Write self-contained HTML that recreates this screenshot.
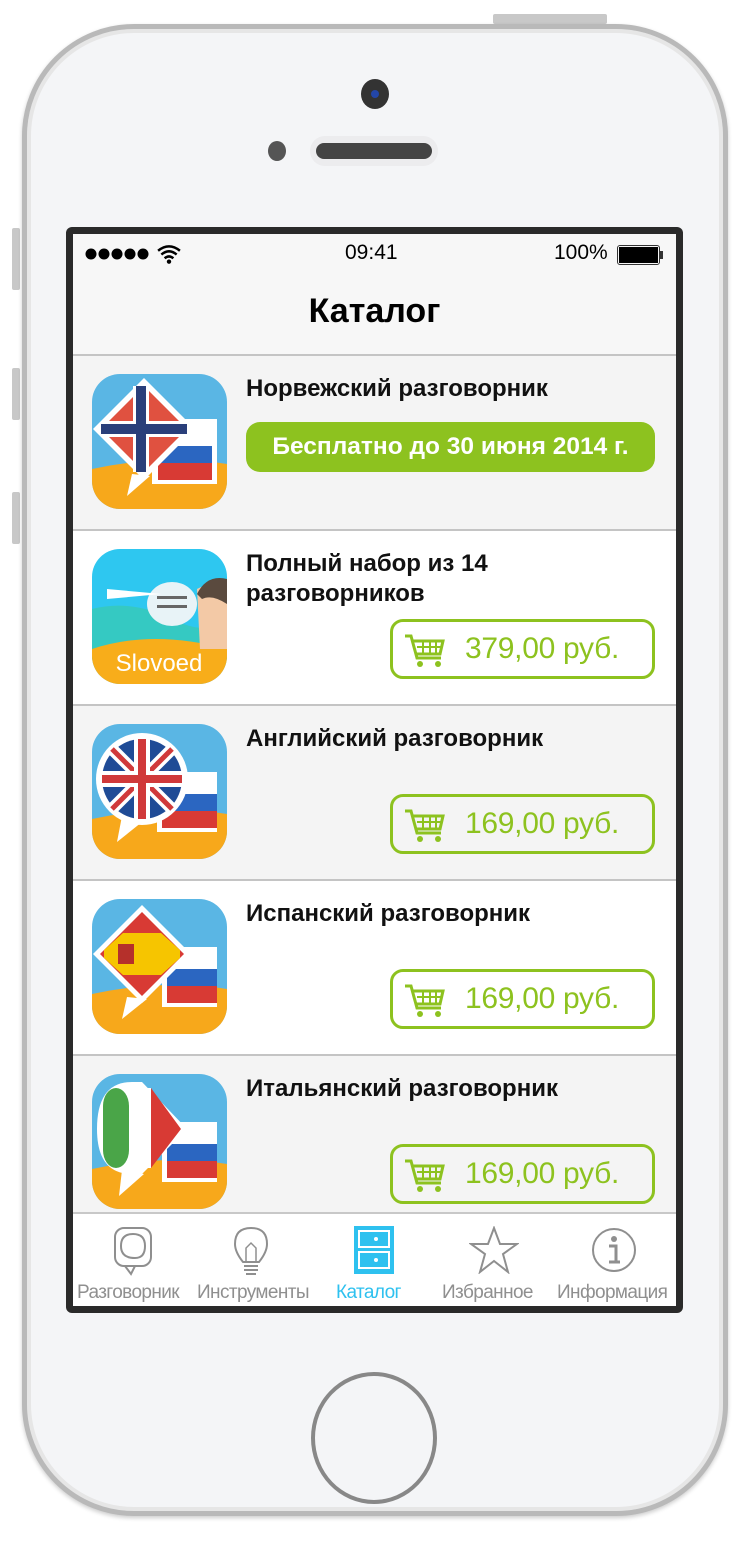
<!DOCTYPE html>
<html><head><meta charset="utf-8">
<style>
*{margin:0;padding:0;box-sizing:border-box}
body{width:744px;height:1548px;background:#fff;position:relative;overflow:hidden;font-family:"Liberation Sans",Arial,sans-serif}
.phone{position:absolute;left:22px;top:24px;width:706px;height:1492px;border-radius:112px;background:#f4f5f7;border:5px solid #b9b9b9;box-shadow:inset 0 0 0 4px #e6e6e6, 0 2px 4px rgba(0,0,0,.2)}
.btn-side{position:absolute;background:#c8c8c8;border-radius:2px}
.screen{position:absolute;left:66px;top:227px;width:617px;height:1086px;background:#2a2a2a;border-radius:6px}
.inner{position:absolute;left:73px;top:234px;width:603px;height:1072px;background:#f7f7f7;overflow:hidden}
.sb{position:absolute;top:7px;font-size:21px;color:#000}
.title{position:absolute;top:58px;width:100%;text-align:center;font-size:34px;font-weight:bold}
.row{position:absolute;left:0;width:603px;height:175px;border-top:2px solid #c4c4c4}
.row .ic{position:absolute;left:19px;top:18px;width:135px;height:135px;border-radius:28px;overflow:hidden}
.row .t{position:absolute;left:173px;top:18px;font-size:24px;font-weight:bold;color:#111;line-height:30px}
.free{position:absolute;left:173px;top:66px;width:409px;height:50px;border-radius:14px;background:#8dc21f;color:#fff;font-size:24.5px;font-weight:bold;text-align:center;line-height:50px}
.buy{position:absolute;left:317px;width:265px;height:60px;border:3px solid #8dc21f;border-radius:13px;color:#8dc21f;font-size:30px;line-height:54px;padding-left:72px;background:transparent;letter-spacing:-0.3px}
.buy svg{position:absolute;left:10px;top:10px}
.tab{position:absolute;left:0;top:978px;width:603px;height:94px;background:#fff;border-top:2px solid #c8c8c8}
.tl{position:absolute;top:68px;font-size:19px;color:#8f8f8f;white-space:nowrap;letter-spacing:-0.6px}
</style></head><body>
<div class="btn-side" style="left:493px;top:14px;width:114px;height:10px"></div>
<div class="btn-side" style="left:12px;top:228px;width:8px;height:62px"></div>
<div class="btn-side" style="left:12px;top:368px;width:8px;height:52px"></div>
<div class="btn-side" style="left:12px;top:492px;width:8px;height:52px"></div>
<div class="phone"></div>
<div style="position:absolute;left:361px;top:79px;width:28px;height:30px;border-radius:50%;background:#333"><div style="margin:11px auto;width:8px;height:8px;border-radius:50%;background:#2346a8"></div></div>
<div style="position:absolute;left:268px;top:141px;width:18px;height:20px;border-radius:50%;background:#555"></div>
<div style="position:absolute;left:310px;top:136px;width:128px;height:30px;border-radius:15px;background:#ececee"></div>
<div style="position:absolute;left:316px;top:143px;width:116px;height:16px;border-radius:8px;background:#444"></div>
<div style="position:absolute;left:311px;top:1372px;width:126px;height:132px;border-radius:50%;border:4px solid #888;background:#f4f5f7"></div>
<div class="screen"></div>
<div class="inner">
 <svg style="position:absolute;left:12px;top:14px" width="64" height="12" viewBox="0 0 64 12"><circle cx="6" cy="6" r="5.5"/><circle cx="19" cy="6" r="5.5"/><circle cx="32" cy="6" r="5.5"/><circle cx="45" cy="6" r="5.5"/><circle cx="58" cy="6" r="5.5"/></svg>
 <svg style="position:absolute;left:84px;top:10px" width="24" height="20" viewBox="0 0 22 18"><path d="M1 6 Q11 -2 21 6 M4 9.5 Q11 3.5 18 9.5 M7 13 Q11 9.5 15 13" fill="none" stroke="#000" stroke-width="2.3"/><circle cx="11" cy="16" r="2" fill="#000"/></svg>
 <div class="sb" style="left:272px">09:41</div>
 <div class="sb" style="left:481px">100%</div>
 <div style="position:absolute;left:544px;top:11px;width:43px;height:20px;border:1.5px solid #333;border-radius:3px;padding:1px"><div style="width:100%;height:100%;background:#000"></div></div>
 <div style="position:absolute;left:587px;top:17px;width:3px;height:8px;background:#333"></div>
 <div class="title">Каталог</div>

 <div class="row" style="top:120px;background:#f4f4f4">
  <div class="ic"><svg width="135" height="135" viewBox="0 0 135 135"><rect width="135" height="135" fill="#5ab6e4"/><path d="M0 95 Q70 80 135 90 V135 H0Z" fill="#f7a81b"/><path d="M60 45 H125 V110 H60Z" fill="#fff"/><rect x="66" y="72" width="54" height="17" fill="#2b66c1"/><rect x="66" y="89" width="54" height="17" fill="#d83a34"/><path d="M52 4 L103 55 L52 106 L1 55Z" fill="#fff"/><path d="M52 12 L95 55 L52 98 L9 55Z" fill="#e05140"/><rect x="41" y="12" width="16" height="86" fill="#fff"/><rect x="9" y="47" width="86" height="16" fill="#fff"/><rect x="44" y="12" width="10" height="86" fill="#2a3f7a"/><rect x="9" y="50" width="86" height="10" fill="#2a3f7a"/><path d="M40 100 L35 122 L58 102Z" fill="#fff"/></svg></div>
  <div class="t">Норвежский разговорник</div>
  <div class="free">Бесплатно до 30 июня 2014 г.</div>
 </div>

 <div class="row" style="top:295px;background:#fff">
  <div class="ic"><svg width="135" height="135" viewBox="0 0 135 135"><rect width="135" height="135" fill="#2ec7f0"/><path d="M0 60 Q40 50 80 70 T135 65 V110 H0Z" fill="#35c9c2"/><path d="M0 100 Q60 80 135 100 V135 H0Z" fill="#f8ad1a"/><ellipse cx="80" cy="55" rx="25" ry="22" fill="#e8f3f7"/><rect x="65" y="47" width="30" height="3" fill="#666"/><rect x="65" y="56" width="30" height="3" fill="#666"/><path d="M105 40 Q135 25 135 40 V100 H108Z" fill="#f3c9a6"/><path d="M105 45 Q115 25 135 30 V55 Q120 45 110 50Z" fill="#5a4a3e"/><path d="M15 40 L70 45 L15 50Z" fill="#fff"/><text x="67" y="122" text-anchor="middle" font-family="Liberation Sans" font-size="24" fill="#fff">Slovoed</text></svg></div>
  <div class="t">Полный набор из 14<br>разговорников</div>
  <div class="buy" style="top:88px"><svg width="44" height="38" viewBox="0 0 44 38"><path d="M2 4 H8 L14 26 H38 M10 9 H40 L37 22 H13" fill="none" stroke="#8dc21f" stroke-width="3"/><path d="M14 15 H38 M20 9 V22 M27 9 V22 M33 9 V22" stroke="#8dc21f" stroke-width="2"/><circle cx="17" cy="32" r="3" fill="#8dc21f"/><circle cx="35" cy="32" r="3" fill="#8dc21f"/></svg>379,00 руб.</div>
 </div>

 <div class="row" style="top:470px;background:#f4f4f4">
  <div class="ic"><svg width="135" height="135" viewBox="0 0 135 135"><rect width="135" height="135" fill="#5ab6e4"/><path d="M0 95 Q70 80 135 90 V135 H0Z" fill="#f7a81b"/><rect x="65" y="48" width="60" height="60" fill="#fff"/><rect x="70" y="70" width="55" height="17" fill="#2b66c1"/><rect x="70" y="87" width="55" height="17" fill="#d83a34"/><circle cx="50" cy="55" r="46" fill="#fff"/><circle cx="50" cy="55" r="40" fill="#1f4b96"/><path d="M20 25 L80 85 M80 25 L20 85" stroke="#fff" stroke-width="12"/><path d="M20 25 L80 85 M80 25 L20 85" stroke="#d0393a" stroke-width="5"/><rect x="10" y="47" width="80" height="16" fill="#fff"/><rect x="42" y="15" width="16" height="80" fill="#fff"/><rect x="10" y="51" width="80" height="8" fill="#d0393a"/><rect x="46" y="15" width="8" height="80" fill="#d0393a"/><path d="M30 92 L25 118 L50 98Z" fill="#fff"/></svg></div>
  <div class="t">Английский разговорник</div>
  <div class="buy" style="top:88px"><svg width="44" height="38" viewBox="0 0 44 38"><path d="M2 4 H8 L14 26 H38 M10 9 H40 L37 22 H13" fill="none" stroke="#8dc21f" stroke-width="3"/><path d="M14 15 H38 M20 9 V22 M27 9 V22 M33 9 V22" stroke="#8dc21f" stroke-width="2"/><circle cx="17" cy="32" r="3" fill="#8dc21f"/><circle cx="35" cy="32" r="3" fill="#8dc21f"/></svg>169,00 руб.</div>
 </div>

 <div class="row" style="top:645px;background:#fff">
  <div class="ic"><svg width="135" height="135" viewBox="0 0 135 135"><rect width="135" height="135" fill="#5ab6e4"/><path d="M0 95 Q70 80 135 90 V135 H0Z" fill="#f7a81b"/><rect x="70" y="48" width="55" height="60" fill="#fff"/><rect x="75" y="70" width="50" height="17" fill="#2b66c1"/><rect x="75" y="87" width="50" height="17" fill="#d83a34"/><path d="M50 6 L99 55 L50 104 L1 55Z" fill="#fff"/><path d="M50 13 L92 55 L50 97 L8 55Z" fill="#d83a34"/><path d="M31 34 H69 L88 51 V59 L69 76 H31 L12 59 V51Z" fill="#f6c500"/><rect x="26" y="45" width="16" height="20" fill="#b5302b"/><path d="M35 98 L30 120 L55 100Z" fill="#fff"/></svg></div>
  <div class="t">Испанский разговорник</div>
  <div class="buy" style="top:88px"><svg width="44" height="38" viewBox="0 0 44 38"><path d="M2 4 H8 L14 26 H38 M10 9 H40 L37 22 H13" fill="none" stroke="#8dc21f" stroke-width="3"/><path d="M14 15 H38 M20 9 V22 M27 9 V22 M33 9 V22" stroke="#8dc21f" stroke-width="2"/><circle cx="17" cy="32" r="3" fill="#8dc21f"/><circle cx="35" cy="32" r="3" fill="#8dc21f"/></svg>169,00 руб.</div>
 </div>

 <div class="row" style="top:820px;background:#f4f4f4">
  <div class="ic"><svg width="135" height="135" viewBox="0 0 135 135"><rect width="135" height="135" fill="#5ab6e4"/><path d="M0 95 Q70 80 135 90 V135 H0Z" fill="#f7a81b"/><rect x="70" y="48" width="55" height="60" fill="#fff"/><rect x="75" y="70" width="50" height="17" fill="#2b66c1"/><rect x="75" y="87" width="50" height="17" fill="#d83a34"/><path d="M40 8 H50 L95 55 L50 100 H40 Q5 100 5 55 Q5 8 40 8Z" fill="#fff"/><rect x="11" y="14" width="26" height="80" fill="#4aa548" rx="18"/><rect x="37" y="14" width="22" height="80" fill="#fff"/><path d="M59 14 L89 55 L59 94Z" fill="#d83a34"/><path d="M30 96 L27 122 L52 100Z" fill="#fff"/></svg></div>
  <div class="t">Итальянский разговорник</div>
  <div class="buy" style="top:88px"><svg width="44" height="38" viewBox="0 0 44 38"><path d="M2 4 H8 L14 26 H38 M10 9 H40 L37 22 H13" fill="none" stroke="#8dc21f" stroke-width="3"/><path d="M14 15 H38 M20 9 V22 M27 9 V22 M33 9 V22" stroke="#8dc21f" stroke-width="2"/><circle cx="17" cy="32" r="3" fill="#8dc21f"/><circle cx="35" cy="32" r="3" fill="#8dc21f"/></svg>169,00 руб.</div>
 </div>

 <div class="tab">
  <svg style="position:absolute;left:40px;top:12px" width="42" height="50" viewBox="0 0 42 50"><rect x="2" y="2" width="36" height="38" rx="9" fill="none" stroke="#8f8f8f" stroke-width="2"/><path d="M20 8 Q32 8 32 20 Q32 32 22 32 Q8 32 8 20 Q8 8 20 8Z" fill="none" stroke="#8f8f8f" stroke-width="2"/><path d="M12 40 L18 48 L22 40" fill="none" stroke="#8f8f8f" stroke-width="2"/></svg>
  <svg style="position:absolute;left:160px;top:12px" width="36" height="54" viewBox="0 0 36 54"><path d="M10 36 Q2 26 2 18 Q2 2 18 2 Q34 2 34 18 Q34 26 26 36Z" fill="none" stroke="#8f8f8f" stroke-width="2"/><path d="M13 36 V22 L18 17 L23 22 V36" fill="none" stroke="#8f8f8f" stroke-width="1.5"/><path d="M11 40 H25 M11 44 H25 M13 48 H23" stroke="#8f8f8f" stroke-width="2"/></svg>
  <div style="position:absolute;left:281px;top:12px;width:40px;height:48px;background:#2ec1ef;padding:4px"><div style="height:18px;border:2px solid #fff;margin-bottom:3px;position:relative"><div style="position:absolute;left:14px;top:5px;width:4px;height:4px;background:#fff;border-radius:50%"></div></div><div style="height:18px;border:2px solid #fff;position:relative"><div style="position:absolute;left:14px;top:5px;width:4px;height:4px;background:#fff;border-radius:50%"></div></div></div>
  <svg style="position:absolute;left:396px;top:12px" width="50" height="48" viewBox="0 0 50 48"><path d="M25 2 L31 18 L48 18 L34 28 L39 46 L25 35 L11 46 L16 28 L2 18 L19 18Z" fill="none" stroke="#8f8f8f" stroke-width="2"/></svg>
  <svg style="position:absolute;left:517px;top:12px" width="48" height="48" viewBox="0 0 48 48"><circle cx="24" cy="24" r="21" fill="none" stroke="#8f8f8f" stroke-width="2"/><circle cx="24" cy="13" r="3" fill="#8f8f8f"/><path d="M19 20 H26 V36 M19 36 H30" fill="none" stroke="#8f8f8f" stroke-width="3"/></svg>
  <div class="tl" style="left:4px">Разговорник</div>
  <div class="tl" style="left:124px">Инструменты</div>
  <div class="tl" style="left:263px;color:#2ec1ef">Каталог</div>
  <div class="tl" style="left:369px">Избранное</div>
  <div class="tl" style="left:484px">Информация</div>
 </div>
</div>
</body></html>
